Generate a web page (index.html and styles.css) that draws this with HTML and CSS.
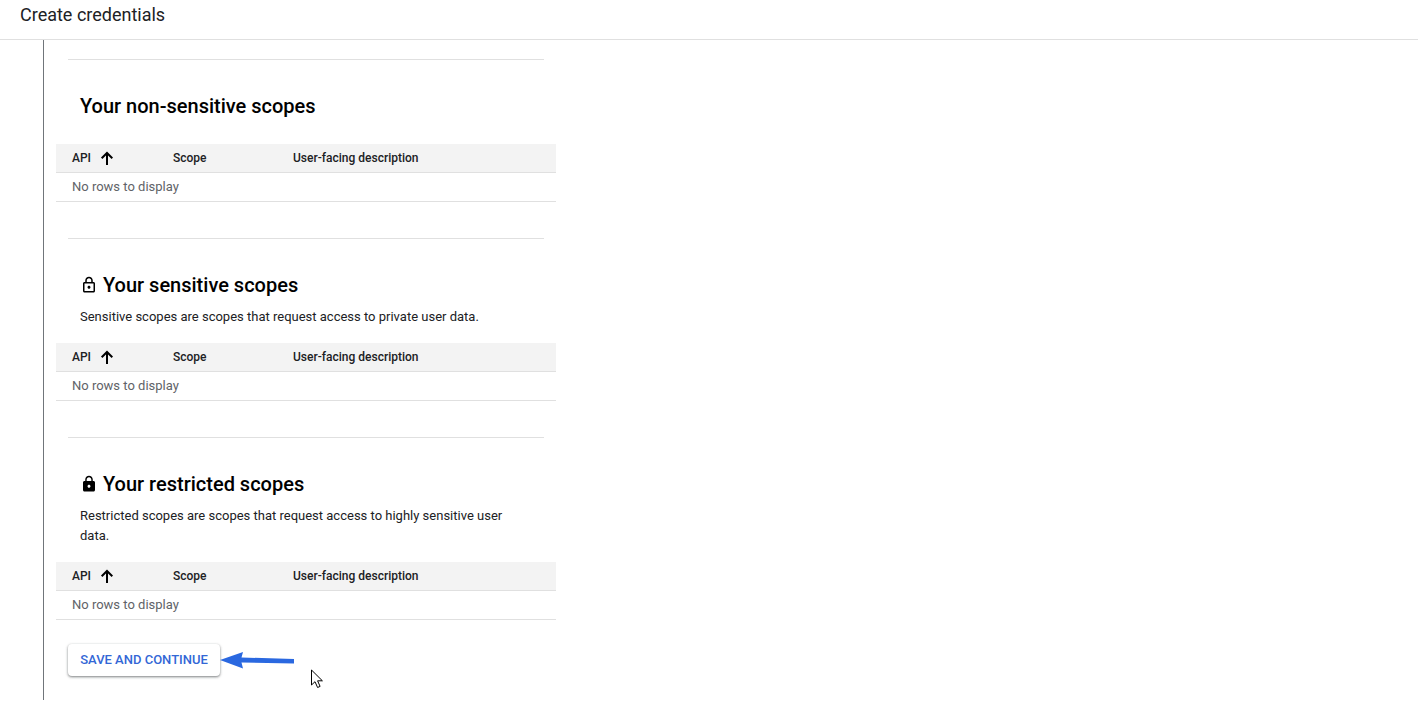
FILE: index.html
```html
<!DOCTYPE html>
<html lang="en">
<head>
<meta charset="utf-8">
<title>Create credentials</title>
<link rel="stylesheet" href="styles.css">
</head>
<body>
<header class="topbar"><h1 class="page-title">Create credentials</h1></header>
<main class="step">
  <section class="scope scope-first">
    <hr class="rule">
    <h2 class="scope-title">Your non-sensitive scopes</h2>
    <div class="grid">
      <div class="grid-head"><span class="col-api">API<svg class="sort" viewBox="0 0 16 16"><path d="M8 15V3.200M2.700 8.300 8 3l5.300 5.300" fill="none" stroke="#000" stroke-width="2"/></svg></span><span class="col-scope">Scope</span><span class="col-desc">User-facing description</span></div>
      <div class="grid-empty">No rows to display</div>
    </div>
  </section>
  <section class="scope">
    <hr class="rule">
    <h2 class="scope-title"><svg class="lock" viewBox="0 0 24 24"><path d="M18 8h-1V6c0-2.76-2.24-5-5-5S7 3.24 7 6v2H6c-1.100 0-2 .9-2 2v10c0 1.100.9 2 2 2h12c1.100 0 2-.9 2-2V10c0-1.100-.9-2-2-2zM9 6c0-1.660 1.340-3 3-3s3 1.340 3 3v2H9V6zm9 14H6V10h12v10zm-6-3c1.100 0 2-.9 2-2s-.9-2-2-2-2 .9-2 2 .9 2 2 2z"/></svg>Your sensitive scopes</h2>
    <p class="scope-text">Sensitive scopes are scopes that request access to private user data.</p>
    <div class="grid">
      <div class="grid-head"><span class="col-api">API<svg class="sort" viewBox="0 0 16 16"><path d="M8 15V3.200M2.700 8.300 8 3l5.300 5.300" fill="none" stroke="#000" stroke-width="2"/></svg></span><span class="col-scope">Scope</span><span class="col-desc">User-facing description</span></div>
      <div class="grid-empty">No rows to display</div>
    </div>
  </section>
  <section class="scope">
    <hr class="rule">
    <h2 class="scope-title"><svg class="lock" viewBox="0 0 24 24"><path d="M18 8h-1V6c0-2.760-2.240-5-5-5S7 3.240 7 6v2H6c-1.100 0-2 .9-2 2v10c0 1.100.9 2 2 2h12c1.100 0 2-.9 2-2V10c0-1.100-.9-2-2-2zm-6 9c-1.100 0-2-.9-2-2s.9-2 2-2 2 .9 2 2-.9 2-2 2zm3.100-9H8.900V6c0-1.710 1.390-3.100 3.100-3.100 1.710 0 3.100 1.390 3.100 3.100v2z"/></svg>Your restricted scopes</h2>
    <p class="scope-text">Restricted scopes are scopes that request access to highly sensitive user data.</p>
    <div class="grid">
      <div class="grid-head"><span class="col-api">API<svg class="sort" viewBox="0 0 16 16"><path d="M8 15V3.200M2.700 8.300 8 3l5.300 5.300" fill="none" stroke="#000" stroke-width="2"/></svg></span><span class="col-scope">Scope</span><span class="col-desc">User-facing description</span></div>
      <div class="grid-empty">No rows to display</div>
    </div>
  </section>
  <button class="save" type="button">SAVE AND CONTINUE</button>
</main>
<svg class="arrow" viewBox="0 0 76 20"><path d="M0 10 23 2l-1.500 5.500L74 9v4.500L21.500 12.500 23 18.500z" fill="#2a68e0"/></svg>
<svg class="cursor" viewBox="0 0 14 20"><path d="M1.500 1v15l3.500-3.300 2.600 5.800 2.500-1.100-2.500-5.600h4.800z" fill="#fff" stroke="#000" stroke-width="1"/></svg>
</body>
</html>
```
FILE: styles.css
```css
* { box-sizing: border-box; }
html, body { margin: 0; height: 710px; overflow: hidden; background: #fff; }
body { position: relative; font-family: Roboto, "Liberation Sans", sans-serif; color: #000; }
.topbar { height: 40px; border-bottom: 1px solid #e0e0e0; padding: 0 20px; }
.page-title { margin: 0; font-size: 18px; font-weight: 400; line-height: 29px; color: #202124; }
.step { margin-left: 43px; width: 513px; height: 660px; border-left: 1px solid #70757a; padding-left: 12px; }
.scope { padding-top: 36px; }
.scope-first { padding-top: 19px; }
.rule { margin: 0 12px; border: 0; border-top: 1px solid #e0e0e0; height: 1px; }
.scope-title { display: flex; align-items: center; margin: 34px 0 0; padding-left: 24px; height: 24px; font-size: 20px; font-weight: 500; line-height: 24px; }
.lock { width: 18px; height: 18px; margin-right: 5px; flex: none; }
.scope-text { margin: 10px 0 0; padding: 0 40px 0 24px; font-size: 13px; line-height: 20px; color: #202124; }
.grid { margin-top: 16px; width: 500px; border-bottom: 1px solid #e0e0e0; }
.scope-first .grid { margin-top: 26px; }
.grid-head { display: flex; align-items: center; height: 29px; background: #f3f3f3; border-bottom: 1px solid #e0e0e0; font-size: 12px; font-weight: 500; color: #202124; }
.col-api { display: flex; align-items: center; width: 117px; padding-left: 16px; }
.col-scope { width: 120px; }
.sort { width: 16px; height: 16px; margin-left: 8px; }
.grid-empty { height: 28px; padding-left: 16px; font-size: 13px; line-height: 28px; color: #5f6368; }
.save { display: block; margin: 24px 0 0 12px; width: 152px; height: 32px; padding: 0; border: 0; border-radius: 4px; background: #fff; color: #3367d6; font: 500 13px/32px Roboto, "Liberation Sans", sans-serif; box-shadow: 0 1px 3px rgba(60,64,67,.45), 0 1px 2px rgba(60,64,67,.3); }
.arrow { position: absolute; left: 220px; top: 650px; width: 76px; height: 20px; }
.cursor { position: absolute; left: 310px; top: 669px; width: 14px; height: 20px; }
```
